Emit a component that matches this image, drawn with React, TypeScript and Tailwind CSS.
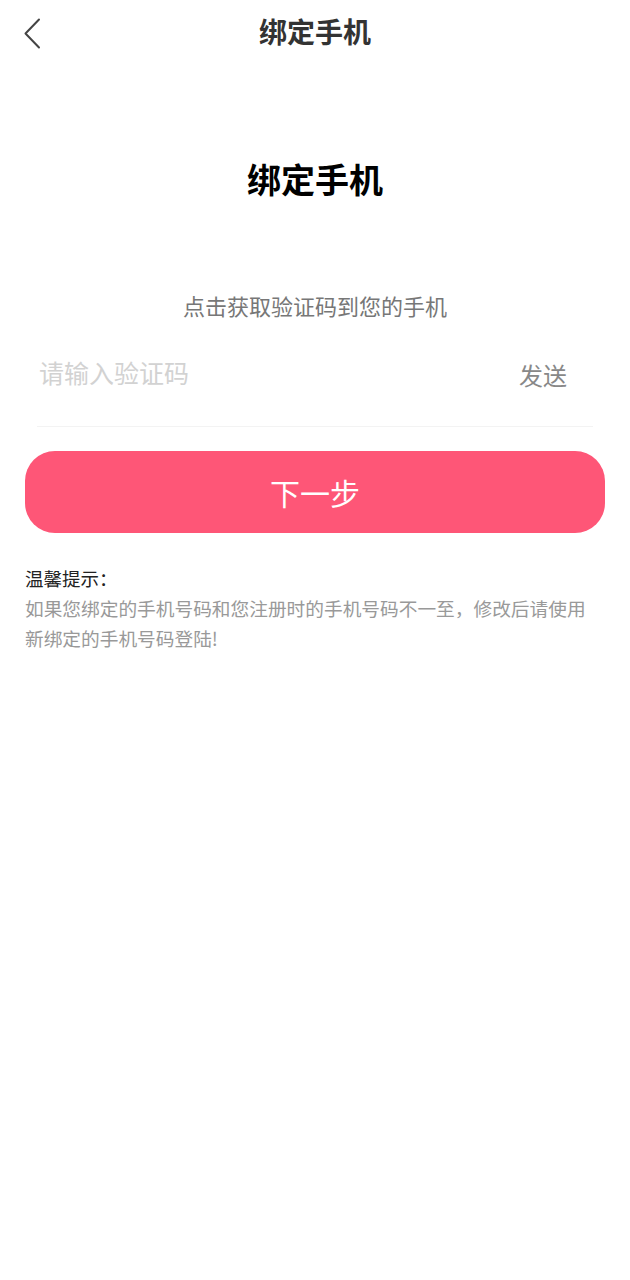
import { useState } from "react";

const font = { fontFamily: '"Noto Sans CJK SC", "Noto Sans", sans-serif' };

function BackIcon() {
  return (
    <svg width="18" height="31" viewBox="0 0 18 31" fill="none">
      <path d="M16 1.5 L2.5 15.5 L16 29.5" stroke="#444" strokeWidth="2" strokeLinecap="round" strokeLinejoin="round" />
    </svg>
  );
}

export default function App() {
  const [code, setCode] = useState("");

  return (
    <div className="min-h-[1280px] w-[630px] bg-white" style={font}>
      {/* header */}
      <header className="relative flex h-16 items-center justify-center">
        <button className="absolute left-[23px] top-[18px]">
          <BackIcon />
        </button>
        <h1 className="-mt-[2px] text-[28px] font-bold leading-[40px] text-[#333]">绑定手机</h1>
      </header>

      <h2 className="mt-[95px] text-center text-[34px] font-bold leading-[40px] text-black">绑定手机</h2>

      <p className="mt-[92px] text-center text-[22px] leading-[28px] text-[#777]">点击获取验证码到您的手机</p>

      {/* code input */}
      <div className="mx-[37px] mt-[38px] flex items-start justify-between border-b border-[#f3f3f3] pb-[36px]">
        <input
          value={code}
          onChange={(e) => setCode(e.target.value)}
          placeholder="请输入验证码"
          className="ml-[2px] h-[30px] w-[300px] bg-transparent text-[25px] leading-[30px] text-[#333] outline-none placeholder:text-[#d2d2d2]"
        />
        <button className="mr-[26px] mt-[3px] text-[24px] leading-[30px] text-[#888]">发送</button>
      </div>

      <button className="mx-[25px] mt-[24px] flex h-[82px] w-[580px] items-center justify-center rounded-[30px] bg-[#fe5677] text-[30px] text-white">
        下一步
      </button>

      {/* tips */}
      <div className="mx-[25px] mt-[30px] w-[570px]">
        <p className="text-[18.5px] leading-[30px] text-[#222]">温馨提示：</p>
        <p className="text-[18.7px] leading-[30px] text-[#999]">
          如果您绑定的手机号码和您注册时的手机号码不一至，修改后请使用新绑定的手机号码登陆!
        </p>
      </div>
    </div>
  );
}
